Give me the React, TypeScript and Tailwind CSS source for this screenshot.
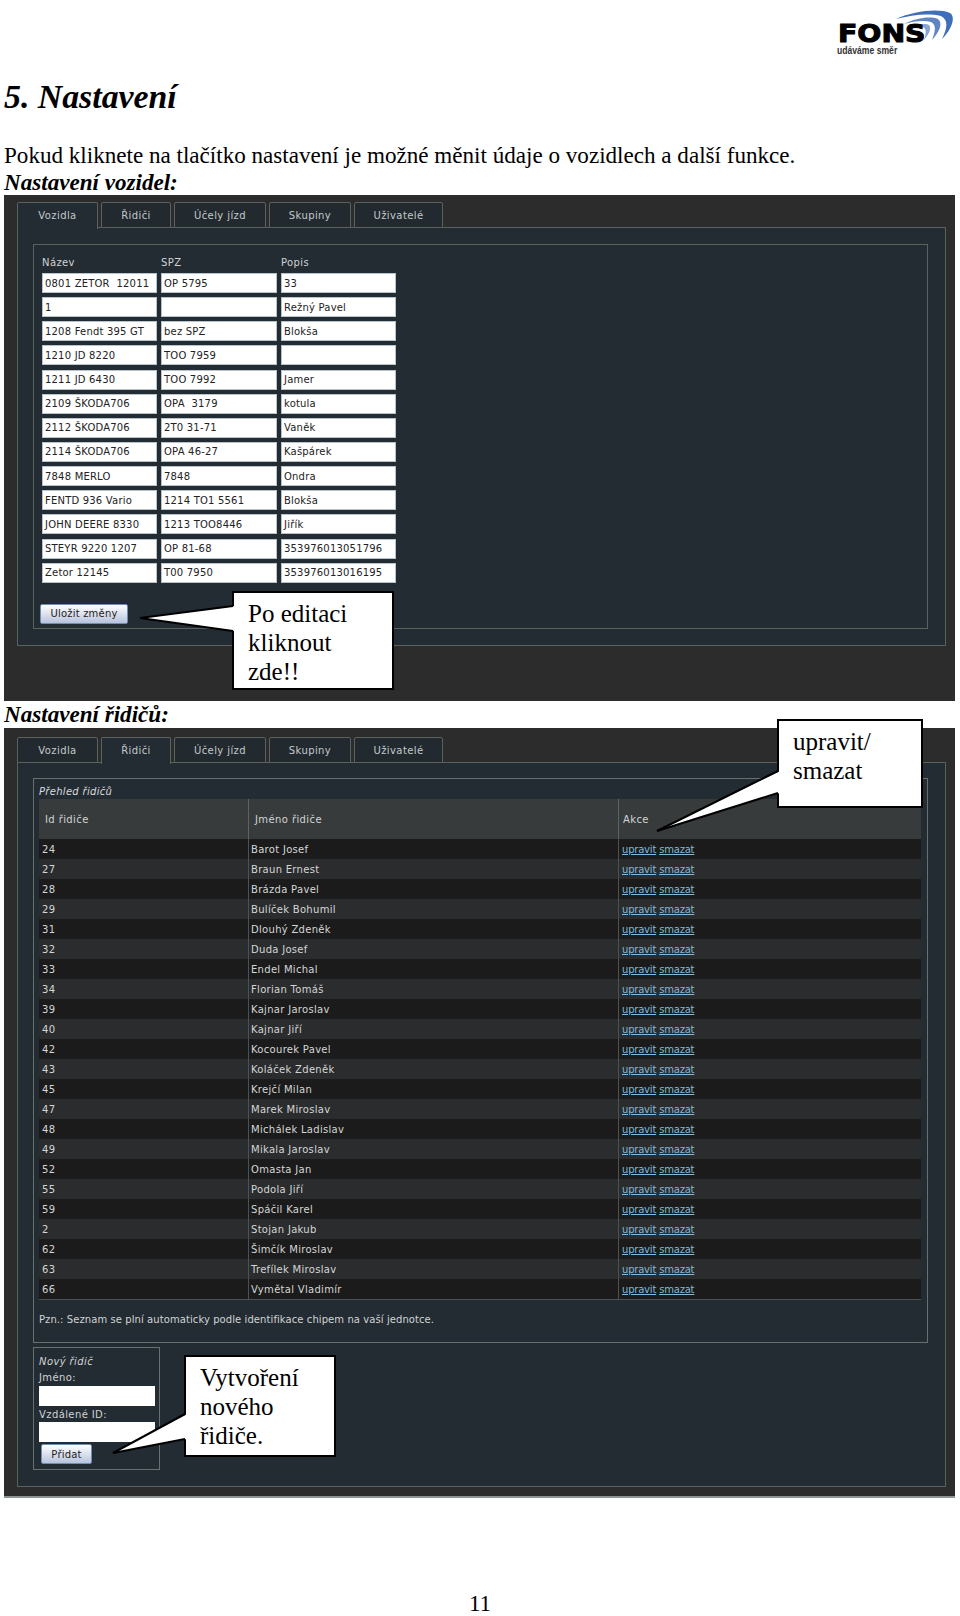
import React from 'react';

const vehicles = [
  ['0801 ZETOR  12011', 'OP 5795', '33'],
  ['1', '', 'Režný Pavel'],
  ['1208 Fendt 395 GT', 'bez SPZ', 'Blokša'],
  ['1210 JD 8220', 'TOO 7959', ''],
  ['1211 JD 6430', 'TOO 7992', 'Jamer'],
  ['2109 ŠKODA706', 'OPA  3179', 'kotula'],
  ['2112 ŠKODA706', '2T0 31-71', 'Vaněk'],
  ['2114 ŠKODA706', 'OPA 46-27', 'Kašpárek'],
  ['7848 MERLO', '7848', 'Ondra'],
  ['FENTD 936 Vario', '1214 TO1 5561', 'Blokša'],
  ['JOHN DEERE 8330', '1213 TOO8446', 'Jiřík'],
  ['STEYR 9220 1207', 'OP 81-68', '353976013051796'],
  ['Zetor 12145', 'T00 7950', '353976013016195'],
];

const drivers: [string, string][] = [
  ['24', 'Barot Josef'],
  ['27', 'Braun Ernest'],
  ['28', 'Brázda Pavel'],
  ['29', 'Bulíček Bohumil'],
  ['31', 'Dlouhý Zdeněk'],
  ['32', 'Duda Josef'],
  ['33', 'Endel Michal'],
  ['34', 'Florian Tomáš'],
  ['39', 'Kajnar Jaroslav'],
  ['40', 'Kajnar Jiří'],
  ['42', 'Kocourek Pavel'],
  ['43', 'Koláček Zdeněk'],
  ['45', 'Krejčí Milan'],
  ['47', 'Marek Miroslav'],
  ['48', 'Michálek Ladislav'],
  ['49', 'Mikala Jaroslav'],
  ['52', 'Omasta Jan'],
  ['55', 'Podola Jiří'],
  ['59', 'Spáčil Karel'],
  ['2', 'Stojan Jakub'],
  ['62', 'Šimčík Miroslav'],
  ['63', 'Trefílek Miroslav'],
  ['66', 'Vymětal Vladimír'],
];

const tabs = [
  { label: 'Vozidla', width: 'w-[81px]' },
  { label: 'Řidiči', width: 'w-[70px]' },
  { label: 'Účely jízd', width: 'w-[92px]' },
  { label: 'Skupiny', width: 'w-[82px]' },
  { label: 'Uživatelé', width: 'w-[89px]' },
];

const Tabs = ({ active }: { active: string }) => (
  <div className="flex gap-[3px] h-[26px] relative z-10">
    {tabs.map((t) => (
      <div
        key={t.label}
        className={`${t.width} flex items-center justify-center border-t border-l border-r border-[#59625f] rounded-t-[2px] text-[10px] tracking-[0.4px] text-[#c4c8c8] ${
          t.label === active ? 'bg-[#232b33] h-[27px] border-b-0 pb-px' : 'bg-[#222a30] border-b'
        }`}
      >
        {t.label}
      </div>
    ))}
  </div>
);

const Button = ({ label, className }: { label: string; className: string }) => (
  <div
    className={`${className} h-[20px] flex items-center justify-center rounded-[2px] border border-[#6f8fb0] bg-gradient-to-b from-white to-[#b9c3dc] text-[10px] tracking-[0.2px] text-[#222]`}
  >
    {label}
  </div>
);

// box with a speech tail; the tail opens through the left border
const Callout = ({
  box,
  baseTop,
  baseBottom,
  tip,
  lines,
}: {
  box: string;
  baseTop: number;
  baseBottom: number;
  tip: [number, number];
  lines: string[];
}) => (
  <div className={`absolute z-20 ${box} bg-white border-2 border-black font-['Liberation_Serif',serif] text-[25px] leading-[29px] text-black`}>
    <svg className="absolute left-[-2px] top-[-2px] overflow-visible" width="1" height="1">
      <polygon points={`3,${baseTop} 3,${baseBottom} ${tip[0]},${tip[1]}`} fill="#fff" />
      <line x1="1" y1={baseTop} x2={tip[0]} y2={tip[1]} stroke="#000" strokeWidth="2" />
      <line x1="1" y1={baseBottom} x2={tip[0]} y2={tip[1]} stroke="#000" strokeWidth="2" />
    </svg>
    <div className="relative pl-[14px] pt-[6px]">
      {lines.map((l) => (
        <div key={l}>{l}</div>
      ))}
    </div>
  </div>
);

const Logo = () => (
  <div className="relative w-[120px] h-[56px] mr-[4px] mt-[6px]">
    <svg className="absolute left-[58px] top-[3px]" width="62" height="36" viewBox="0 0 62 36">
      <path d="M2 10 C20 2 44 -1 56 4 C62 8 58 20 48 30 C53 20 55 11 47 7 C34 4 18 6 2 10Z" fill="#3f6fb8" />
      <path d="M10 15 C22 9 36 7 44 10 C49 14 46 22 38 31 C41 23 43 16 37 13 C30 11 20 12 10 15Z" fill="#5f86c2" />
      <path d="M19 19 C26 15 32 14 35 16 C38 19 35 25 30 31 C32 25 33 20 29 18 C26 17 23 18 19 19Z" fill="#8aa4d0" />
    </svg>
    <div className="absolute left-[2px] top-[15px] origin-left scale-x-[1.18] font-['DejaVu_Sans',sans-serif] font-bold text-[24px] leading-[26px] text-black [-webkit-text-stroke:1px_#000]">
      FONS
    </div>
    <div className="absolute left-[1px] top-[39px] origin-left scale-x-[0.86] font-['Liberation_Sans',sans-serif] font-bold text-[10px] leading-[12px] text-[#333]">
      udáváme směr
    </div>
  </div>
);

const VehiclesShot = () => (
  <div className="ml-[4px] mr-[5px] h-[506px] bg-[#2c2c2c] pt-[7px] pl-[13px] pr-[9px] font-['DejaVu_Sans',sans-serif]">
    <Tabs active="Vozidla" />
    <div className="h-[419px] -mt-px border border-[#59625f] bg-[#232b33] pt-[16px] pl-[15px] pr-[17px]">
      <div className="h-[385px] border border-[#59625f] pl-[8px]">
        <div className="grid grid-cols-[115px_116px_115px] gap-x-[4px] h-[28px] items-center text-[10px] tracking-[0.4px] text-[#cfd3d3] pt-[7px]">
          <span>Název</span>
          <span>SPZ</span>
          <span>Popis</span>
        </div>
        <div className="grid grid-cols-[115px_116px_115px] gap-x-[4px] gap-y-[4.15px]">
          {vehicles.flat().map((v, i) => (
            <div
              key={i}
              className="h-[20px] bg-white border border-[#b8c4cc] pl-[2px] flex items-center whitespace-pre text-[10px] tracking-[0.2px] text-[#222]"
            >
              {v}
            </div>
          ))}
        </div>
        <Button label="Uložit změny" className="w-[88px] mt-[21px] -ml-[2px]" />
      </div>
    </div>
  </div>
);

const DriversShot = () => (
  <div className="ml-[4px] mr-[5px] h-[770px] bg-[#2c2c2c] pt-[9px] pl-[13px] pr-[9px] border-b-2 border-[#8e9494] font-['DejaVu_Sans',sans-serif]">
    <Tabs active="Řidiči" />
    <div className="h-[725px] -mt-px border border-[#59625f] bg-[#232b33] pt-[15px] pl-[15px] pr-[17px]">
      <div className="h-[565px] border border-[#68706f] pl-[5px] pr-[6px] pt-[4px]">
        <div className="h-[16px] flex items-center italic text-[10px] tracking-[0.3px] text-[#d8dcdc]">Přehled řidičů</div>
        <div className="border-b border-[#4c5454]">
          <div className="grid grid-cols-[210px_370px_302px] h-[40px] bg-[#383b3c] text-[10px] tracking-[0.4px] text-[#cfd3d3]">
            <div className="flex items-center pl-[6px] pt-px border-r border-[#5d6363]">Id řidiče</div>
            <div className="flex items-center pl-[6px] pt-px border-r border-[#5d6363]">Jméno řidiče</div>
            <div className="flex items-center pl-[4px] pt-px">Akce</div>
          </div>
          {drivers.map(([id, name], i) => (
            <div
              key={id}
              className={`grid grid-cols-[210px_370px_302px] h-[20px] text-[10px] tracking-[0.3px] text-[#d4d6d6] ${
                i % 2 === 0 ? 'bg-[#1b1b1b]' : 'bg-[#2a2c2d]'
              }`}
            >
              <div className="flex items-center pl-[3px] border-r border-[#4c5252]">{id}</div>
              <div className="flex items-center pl-[2px] border-r border-[#4c5252]">{name}</div>
              <div className="flex items-center gap-[3px] pl-[3px] text-[#83b8d6] underline tracking-[-0.2px]">
                <span>upravit</span>
                <span>smazat</span>
              </div>
            </div>
          ))}
        </div>
        <div className="mt-[10px] h-[18px] flex items-center text-[10px] tracking-[0.08px] text-[#d0d4d4]">
          Pzn.: Seznam se plní automaticky podle identifikace chipem na vaší jednotce.
        </div>
      </div>
      <div className="mt-[4px] w-[127px] h-[123px] border border-[#68706f] pl-[5px] pt-[6px] text-[10px] tracking-[0.4px] text-[#d0d4d4]">
        <div className="h-[15px] flex items-center italic">Nový řidič</div>
        <div className="h-[16px] flex items-center">Jméno:</div>
        <div className="h-[20px] w-[116px] mt-[1px] bg-white" />
        <div className="h-[16px] flex items-center">Vzdálené ID:</div>
        <div className="h-[20px] w-[116px] bg-white" />
        <Button label="Přidat" className="w-[51px] mt-[2px] ml-[2px]" />
      </div>
    </div>
  </div>
);

export default function App() {
  return (
    <div className="relative w-[960px] h-[1616px] bg-white overflow-hidden font-['Liberation_Serif',serif] text-black">
      <div className="h-[78px] flex justify-end">
        <Logo />
      </div>
      <h1 className="pl-[4px] h-[37px] text-[33.8px] leading-[37px] font-bold italic">5. Nastavení</h1>
      <p className="mt-[27px] pl-[4px] h-[27px] text-[23.1px] leading-[27px]">
        Pokud kliknete na tlačítko nastavení je možné měnit údaje o vozidlech a další funkce.
      </p>
      <h2 className="pl-[4px] h-[26px] text-[23.1px] leading-[26px] font-bold italic">Nastavení vozidel:</h2>
      <VehiclesShot />
      <h2 className="pl-[4px] h-[27px] text-[23.1px] leading-[27px] font-bold italic">Nastavení řidičů:</h2>
      <DriversShot />
      <div className="mt-[93px] text-center text-[23.1px] leading-[24px]">11</div>

      <Callout
        box="left-[232px] top-[591px] w-[162px] h-[99px]"
        baseTop={15}
        baseBottom={40}
        tip={[-92, 27]}
        lines={['Po editaci', 'kliknout', 'zde!!']}
      />
      <Callout
        box="left-[777px] top-[719px] w-[146px] h-[89px]"
        baseTop={52}
        baseBottom={74}
        tip={[-120, 112]}
        lines={['upravit/', 'smazat']}
      />
      <Callout
        box="left-[184px] top-[1355px] w-[152px] h-[102px]"
        baseTop={59}
        baseBottom={84}
        tip={[-71, 98]}
        lines={['Vytvoření', 'nového', 'řidiče.']}
      />
    </div>
  );
}
